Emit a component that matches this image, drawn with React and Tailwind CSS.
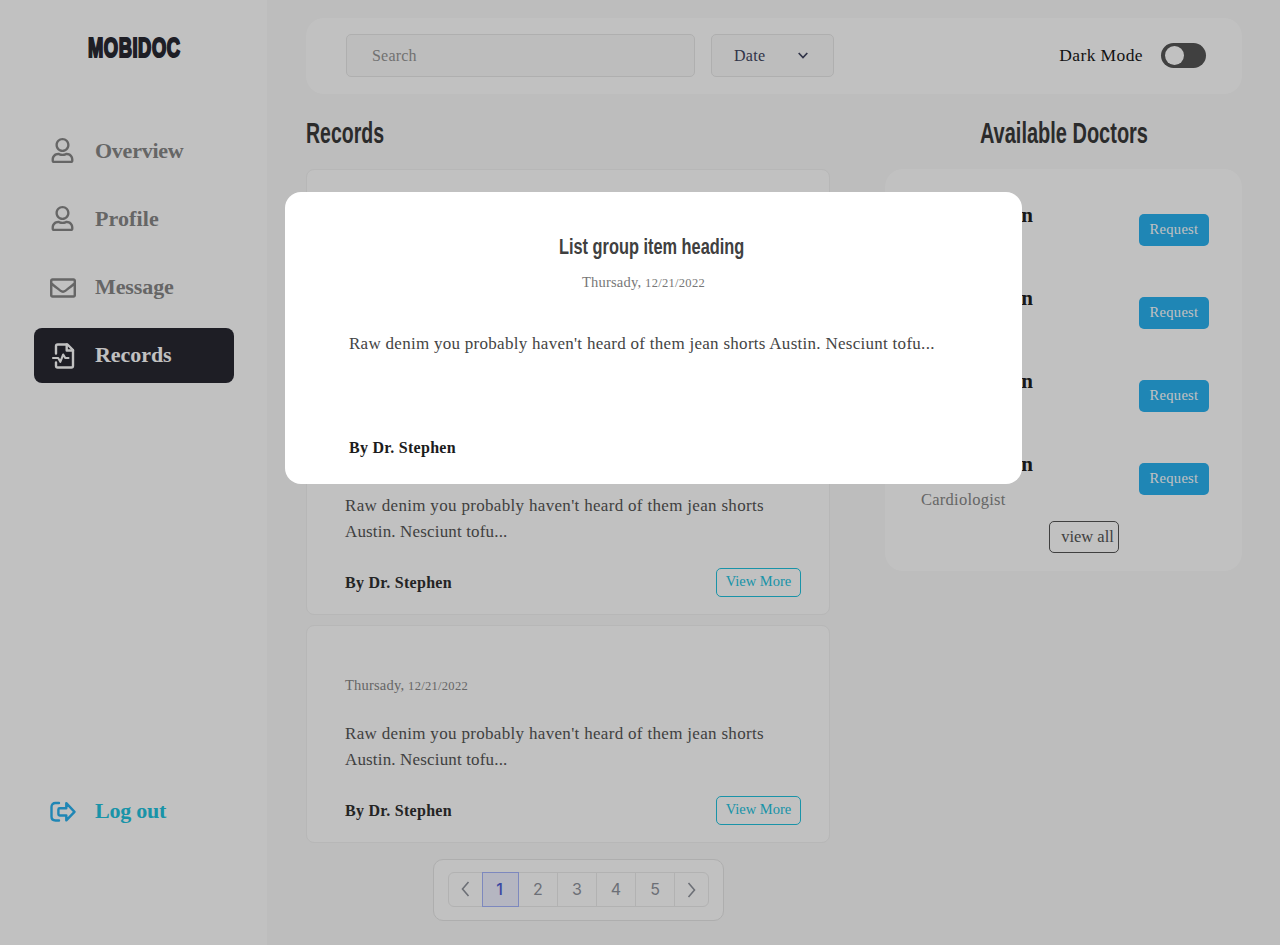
import { FaRegUser, FaRegEnvelope } from "react-icons/fa";

const SERIF = "font-['Liberation_Serif',serif]";

function RecordsIcon() {
  return (
    <svg className="-mr-px" width="26" height="26" viewBox="0 0 26 26" fill="none" stroke="currentColor" strokeWidth="2.4" strokeLinejoin="round" strokeLinecap="round">
      <path d="M5 10.500V3.200C5 2.200 5.600 1.500 6.600 1.500H16.500L22 7V22.800C22 23.800 21.400 24.500 20.400 24.500H6.600C5.600 24.500 5 23.800 5 22.800V19.500" />
      <path d="M15.700 1.500V7.500H22" />
      <path d="M2 15H7.200L9.300 18.800L12.200 11.500L14.300 15H17.500" strokeWidth="2.100" />
    </svg>
  );
}

function LogoutIcon() {
  return (
    <svg width="26" height="22" viewBox="0 0 26 22" fill="none" stroke="currentColor" strokeWidth="2.4" strokeLinejoin="round" strokeLinecap="round">
      <path d="M9 2H5.500C3 2 1.500 3.500 1.500 6V15.500C1.500 18 3 19.500 5.500 19.500H9" />
      <path d="M16.300 2.200L24.500 10.800L16.300 19.300V14.500H9.700C8.900 14.500 8.400 14 8.400 13.300V8.500C8.400 7.800 8.900 7.300 9.700 7.300H16.300Z" />
    </svg>
  );
}

const nav = [
  { label: "Overview", icon: <FaRegUser className="mb-0.5 mr-px" size={25} />, spacing: "tracking-[-0.25px]" },
  { label: "Profile", icon: <FaRegUser className="mb-0.5 mr-px" size={25} />, spacing: "tracking-[0.1px]" },
  { label: "Message", icon: <FaRegEnvelope size={26} />, spacing: "tracking-[-0.1px]" },
  { label: "Records", icon: <RecordsIcon />, active: true, spacing: "tracking-[-0.05px]" },
];

function Sidebar() {
  return (
    <aside className="flex w-[267px] shrink-0 flex-col bg-white px-[34px]">
      <div className="flex h-[124px] pl-[54px] pt-[32px]">
        <span className="inline-block origin-left scale-x-[0.68] font-['Liberation_Sans',sans-serif] text-[27px] font-bold leading-[33px] tracking-[0.8px] text-[#282832] [-webkit-text-stroke:2px_#282832]">
          MOBIDOC
        </span>
      </div>
      <nav className="flex flex-col gap-[13px]">
        {nav.map((n) => (
          <a
            key={n.label}
            className={
              "flex h-[55px] w-[200px] items-center rounded-lg text-[22px] font-bold " +
              (n.active ? "bg-[#282832] text-white" : "text-[#878787]")
            }
          >
            <span className="ml-4 flex w-[26px] justify-center">{n.icon}</span>
            <span className={"ml-[19px] pb-0.5 " + n.spacing}>{n.label}</span>
          </a>
        ))}
      </nav>
      <a className="mb-[106px] mt-auto flex h-[55px] items-center text-[22px] font-bold">
        <span className="ml-4 text-[#2ab1ef]"><LogoutIcon /></span>
        <span className="ml-[19px] pb-0.5 tracking-[-0.25px] text-[#22c3de]">Log out</span>
      </a>
    </aside>
  );
}

function DateLine() {
  return (
    <>
      Thursady, <span className="text-[12.5px] tracking-[0.3px]">12/21/2022</span>
    </>
  );
}

function RecordCard() {
  return (
    <article className="flex h-[218px] flex-col rounded-lg border border-[#f2f2f2] bg-white px-[38px]">
      <p className="mt-[49px] text-[14.5px] leading-5 tracking-[0.2px] text-[#878787]"><DateLine /></p>
      <p className="mt-[25px] w-[440px] text-[17px] leading-[26px] tracking-[0.32px] text-[#555]">
        Raw denim you probably haven't heard of them jean shorts
        <br />
        <span className="tracking-[0.16px]">Austin. Nesciunt tofu...</span>
      </p>
      <div className="mr-[-10px] mt-[23px] flex items-center justify-between">
        <span className="text-[16px] font-bold tracking-[0.28px] text-[#303030]">By Dr. Stephen</span>
        <button className="h-[29px] w-[85px] rounded-[5px] border border-[#22c3de] pb-0.5 text-[14.5px] text-[#22c3de]">
          View More
        </button>
      </div>
    </article>
  );
}

function Pagination() {
  const cell = "flex w-[39px] items-center justify-center border-r border-[#ececec] pb-0.5";
  return (
    <div className="ml-[127px] mt-[16px] flex h-[62px] w-[291px] justify-center rounded-[10px] border border-[#e6e6e6] bg-white pt-[12px]">
      <div className="flex h-[35px] w-[261px] rounded-md border border-[#ececec] font-['Inter',sans-serif] text-[16px] text-[#8f939c]">
        <span className="flex w-[33px] items-center justify-center pb-0.5">
          <svg width="9" height="16" viewBox="0 0 9 16" fill="none" stroke="currentColor" strokeWidth="1.6"><path d="M7.500 1L1.500 8L7.500 15" /></svg>
        </span>
        <span className="-my-px flex w-[37px] items-center justify-center border border-[#a5b4fc] bg-[#f0f1ff] pb-0.5 pr-0.5 font-medium text-[#4f60d8]">1</span>
        <span className={cell}>2</span>
        <span className={cell}>3</span>
        <span className={cell}>4</span>
        <span className={cell}>5</span>
        <span className="flex flex-1 items-center justify-center">
          <svg width="9" height="16" viewBox="0 0 9 16" fill="none" stroke="currentColor" strokeWidth="1.6"><path d="M1.500 1L7.500 8L1.500 15" /></svg>
        </span>
      </div>
    </div>
  );
}

function Heading({ children, className }) {
  return (
    <span className={"inline-block whitespace-nowrap font-['Liberation_Sans',sans-serif] font-bold " + className}>
      {children}
    </span>
  );
}

function Doctors() {
  return (
    <section className="h-[402px] w-[357px] rounded-[18px] bg-white pl-[36px] pr-[33px] pt-[34px]">
      {[0, 1, 2, 3].map((i) => (
        <div key={i} className="flex h-[83px] justify-between">
          <div>
            <h3 className="w-[112px] whitespace-nowrap text-[21px] font-bold leading-6 tracking-[0.65px] text-[#202020]">Dr. Stephen</h3>
            <p className="mt-[12px] text-[16.5px] leading-6 tracking-[0.25px] text-[#878787]">Cardiologist</p>
          </div>
          <button className="mt-[10.5px] h-[32px] w-[70px] rounded-[5px] bg-[#2ab1ef] text-[14.5px] tracking-[0.3px] text-white">
            Request
          </button>
        </div>
      ))}
      <button className="ml-[128px] mt-[-14px] block h-[32px] w-[70px] rounded-[5px] border border-[#555] pl-[7px] text-[16.5px] text-[#555]">
        view all
      </button>
    </section>
  );
}

export default function App() {
  return (
    <div className={"relative flex h-[945px] w-[1280px] overflow-hidden bg-[#fafafa] " + SERIF}>
      <Sidebar />
      <main className="flex-1 pl-[39px] pr-[38px] pt-[18px]">
        <header className="flex h-[76px] items-center rounded-[18px] bg-white pb-px pl-[40px] pr-[36px]">
          <div className="flex h-[43px] w-[349px] items-center rounded-[5px] border border-[#e8e8e8] bg-[#fafafa] pl-[25px] text-[16px] tracking-[0.2px] text-[#969696]">
            Search
          </div>
          <div className="ml-4 flex h-[43px] w-[123px] items-center justify-between rounded-[5px] border border-[#e8e8e8] bg-[#fafafa] pl-[22px] pr-[25px] text-[16px] tracking-[0.3px] text-[#414560]">
            Date
            <svg width="10" height="7" viewBox="0 0 10 7" fill="none" stroke="currentColor" strokeWidth="1.700"><path d="M.7 1L5 5.500L9.300 1" /></svg>
          </div>
          <span className="ml-auto text-[17.5px] tracking-[0.4px] text-[#181818]">Dark Mode</span>
          <div className="ml-[18px] flex h-[25px] w-[45px] items-center rounded-full bg-[#555] pl-[4px]">
            <span className="h-[19px] w-[19px] rounded-full bg-white" />
          </div>
        </header>
        <div className="flex justify-between">
          <section className="w-[524px]">
            <h2 className="flex h-[75px] items-center pt-[2px] leading-8 text-[#393939]">
              <Heading className="origin-left scale-x-[0.672] text-[29px]">Records</Heading>
            </h2>
            <div className="flex flex-col gap-[10px]">
              <RecordCard />
              <RecordCard />
              <RecordCard />
            </div>
            <Pagination />
          </section>
          <section className="w-[357px]">
            <h2 className="flex h-[75px] items-center justify-center pt-[2px] leading-8 text-[#393939]">
              <Heading className="scale-x-[0.689] text-[29px]">Available Doctors</Heading>
            </h2>
            <Doctors />
          </section>
        </div>
      </main>

      <div className="absolute inset-0 bg-black/[0.243]" />
      <div className="absolute left-[285px] top-[192px] flex h-[292px] w-[737px] flex-col rounded-[16px] bg-white pl-[64px]">
        <div className="ml-[210px] mt-[39px] h-8 leading-8 text-[#404040]">
          <Heading className="origin-left scale-x-[0.743] text-[22px]">List group item heading</Heading>
        </div>
        <p className="ml-[233px] mt-[9px] text-[14.5px] leading-5 tracking-[0.2px] text-[#777]"><DateLine /></p>
        <p className="mt-[38px] whitespace-nowrap text-[17px] leading-[26px] tracking-[0.28px] text-[#444]">
          Raw denim you probably haven't heard of them jean shorts Austin. Nesciunt tofu...
        </p>
        <p className="mt-[79px] text-[16px] font-bold leading-6 tracking-[0.28px] text-[#1c1c1c]">By Dr. Stephen</p>
      </div>
    </div>
  );
}
